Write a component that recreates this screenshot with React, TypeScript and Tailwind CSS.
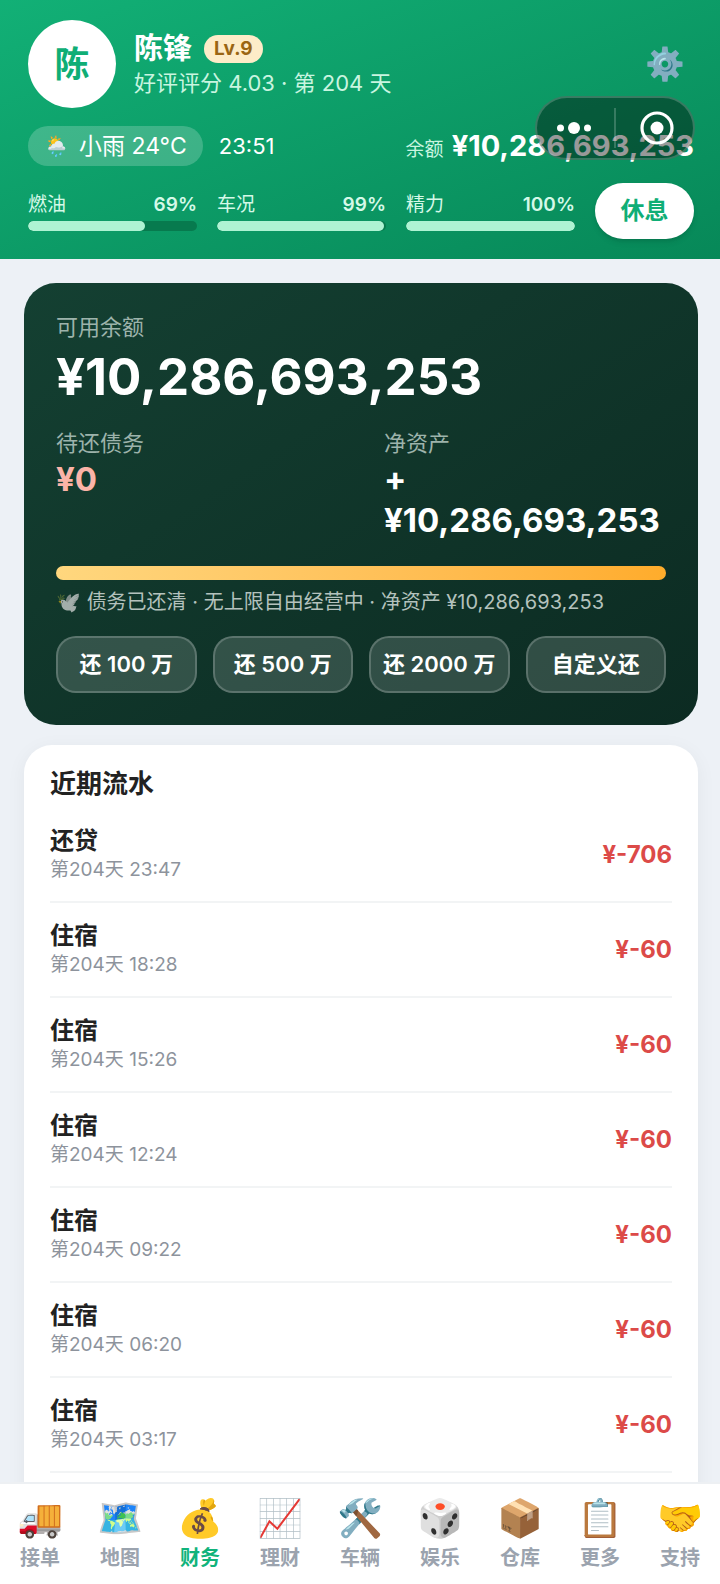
const stats = [
  { label: "燃油", value: 69 },
  { label: "车况", value: 99 },
  { label: "精力", value: 100 },
];

const repayOptions = ["还 100 万", "还 500 万", "还 2000 万", "自定义还"];

const records = [
  { title: "还贷", time: "第204天 23:47", amount: "¥-706" },
  { title: "住宿", time: "第204天 18:28", amount: "¥-60" },
  { title: "住宿", time: "第204天 15:26", amount: "¥-60" },
  { title: "住宿", time: "第204天 12:24", amount: "¥-60" },
  { title: "住宿", time: "第204天 09:22", amount: "¥-60" },
  { title: "住宿", time: "第204天 06:20", amount: "¥-60" },
  { title: "住宿", time: "第204天 03:17", amount: "¥-60" },
];

const tabs = [
  { icon: "🚚", label: "接单" },
  { icon: "🗺️", label: "地图" },
  { icon: "💰", label: "财务" },
  { icon: "📈", label: "理财" },
  { icon: "🛠️", label: "车辆" },
  { icon: "🎲", label: "娱乐" },
  { icon: "📦", label: "仓库" },
  { icon: "📋", label: "更多" },
  { icon: "🤝", label: "支持" },
];

function Header() {
  return (
    <header className="relative flex shrink-0 flex-col bg-linear-to-br from-[#12b076] to-[#078858] pt-5 pr-[26px] pb-5 pl-7 text-white">
      <div className="flex items-center">
        <div className="flex size-[88px] items-center justify-center rounded-full bg-white text-[35px] font-bold text-[#0fae76]">
          陈
        </div>
        <div className="ml-[18px] flex-1 pt-[2px]">
          <div className="flex items-center gap-3">
            <h1 className="text-[29px] leading-9 font-bold">陈锋</h1>
            <span className="rounded-full bg-[#fdecc8] px-[10px] text-[19px] leading-7 font-bold text-[#9a6512]">
              Lv.9
            </span>
          </div>
          <p className="text-[22px] leading-8 text-[#c9f5e0]">
            好评评分 4.03 · 第 204 天
          </p>
        </div>
        <button className="flex size-[58px] items-center justify-center text-[32px]" aria-label="设置">
          ⚙️
        </button>
      </div>

      <div className="mt-[18px] flex h-10 items-center">
        <span className="flex h-10 items-center gap-[10px] rounded-[20px] bg-white/20 px-4 text-[23px]">
          <span className="text-[20px]">🌦️</span>小雨 24°C
        </span>
        <span className="ml-4 text-[22px]">23:51</span>
        <div className="ml-auto flex items-baseline gap-2">
          <span className="text-[19px] text-[#c9f5e0]">余额</span>
          <span className="text-[29px] font-bold">¥10,286,693,253</span>
        </div>
      </div>

      <div className="mt-[17px] flex items-center gap-5">
        {stats.map((s) => (
          <div key={s.label} className="flex-1">
            <div className="flex justify-between text-[19px] leading-7 text-[#d5f9e8]">
              <span>{s.label}</span>
              <span className="font-semibold">{s.value}%</span>
            </div>
            <div className="mt-[2px] h-[10px] overflow-hidden rounded-full bg-[#077a4e]">
              <div className="h-full rounded-full bg-[#aef3d3]" style={{ width: `${s.value}%` }} />
            </div>
          </div>
        ))}
        <button className="h-14 w-[99px] rounded-full bg-white text-[24px] font-bold text-[#0fae76] shadow-md">
          休息
        </button>
      </div>

      {/* floating mini-program capsule */}
      <div className="absolute top-24 right-[25px] flex h-16 w-40 items-center rounded-full border-2 border-white/20 bg-black/40">
        <button className="flex flex-1 items-center justify-center pr-1" aria-label="菜单">
          <svg width="36" height="14" viewBox="0 0 36 14" fill="#fff">
            <circle cx="4.500" cy="7" r="3.500" />
            <circle cx="18" cy="7" r="6" />
            <circle cx="31.500" cy="7" r="3.500" />
          </svg>
        </button>
        <div className="h-10 w-[2px] bg-white/20" />
        <button className="flex flex-1 items-center justify-center pl-1" aria-label="关闭">
          <svg width="34" height="34" viewBox="0 0 34 34">
            <circle cx="17" cy="17" r="15" fill="none" stroke="#fff" strokeWidth="3.200" />
            <circle cx="17" cy="17" r="6.500" fill="#fff" />
          </svg>
        </button>
      </div>
    </header>
  );
}

function BalanceCard() {
  return (
    <section className="rounded-[32px] bg-linear-to-br from-[#144032] to-[#0c2b22] p-8 text-white">
      <p className="text-[22px] leading-6 text-[#9db3ab]">可用余额</p>
      <p className="mt-1 text-[51px] leading-[68px] font-bold">¥10,286,693,253</p>

      <div className="mt-4 grid grid-cols-2 gap-[46px]">
        <div>
          <p className="text-[22px] leading-8 text-[#9db3ab]">待还债务</p>
          <p className="text-[33px] leading-[41px] font-bold text-[#fbb4a8]">¥0</p>
        </div>
        <div>
          <p className="text-[22px] leading-8 text-[#9db3ab]">净资产</p>
          <p className="text-[33px] leading-[41px] font-bold">
            +<br />
            ¥10,286,693,253
          </p>
        </div>
      </div>

      <div className="mt-[25px] h-[14px] rounded-full bg-linear-to-r from-[#ffd77e] to-[#ffac2b]" />
      <p className="mt-[6px] text-[20px] leading-8 text-[#b4c2bd]">
        <span className="opacity-70">🕊️</span> 债务已还清 · 无上限自由经营中 · 净资产 ¥10,286,693,253
      </p>

      <div className="mt-[18px] grid grid-cols-4 gap-4">
        {repayOptions.map((label) => (
          <button
            key={label}
            className="h-[57px] rounded-[20px] border-2 border-white/20 bg-white/15 text-[22px] font-semibold whitespace-nowrap"
          >
            {label}
          </button>
        ))}
      </div>
    </section>
  );
}

function Records() {
  return (
    <section className="mt-5 rounded-[28px] bg-white px-[26px] pt-[21px] pb-12 shadow-[0_4px_20px_rgba(15,23,42,0.05)]">
      <h2 className="text-[26px] leading-9 font-bold text-[#222]">近期流水</h2>
      <ul className="mt-[6px]">
        {records.map((r) => (
          <li
            key={r.time}
            className="flex h-[95px] items-center justify-between border-b-2 border-[#f2f4f5]"
          >
            <div>
              <p className="text-[24px] leading-[30px] font-bold text-[#222]">{r.title}</p>
              <p className="text-[19px] leading-7 text-[#8d939c]">{r.time}</p>
            </div>
            <span className="text-[24px] font-bold text-[#dc4a48]">{r.amount}</span>
          </li>
        ))}
      </ul>
    </section>
  );
}

function TabBar() {
  return (
    <nav className="grid shrink-0 grid-cols-9 border-t-2 border-[#edf0f3] bg-white pt-[10px] pb-3">
      {tabs.map((t) => (
        <a
          key={t.label}
          href="#"
          className={
            t.label === "财务"
              ? "flex flex-col items-center text-[20px] font-bold text-[#10b37b]"
              : "flex flex-col items-center text-[20px] font-bold text-[#9ba3ae]"
          }
        >
          <span className="text-[37px] leading-[48px] font-normal">{t.icon}</span>
          <span className="mt-[2px] leading-7">{t.label}</span>
        </a>
      ))}
    </nav>
  );
}

export default function App() {
  return (
    <div className="flex h-screen flex-col bg-[#edf1f6] font-['Inter','Noto_Sans_CJK_SC',sans-serif]">
      <Header />
      <main className="min-h-0 flex-1 overflow-y-auto pt-6 pr-[22px] pl-6 [scrollbar-width:none]">
        <BalanceCard />
        <Records />
      </main>
      <TabBar />
    </div>
  );
}
